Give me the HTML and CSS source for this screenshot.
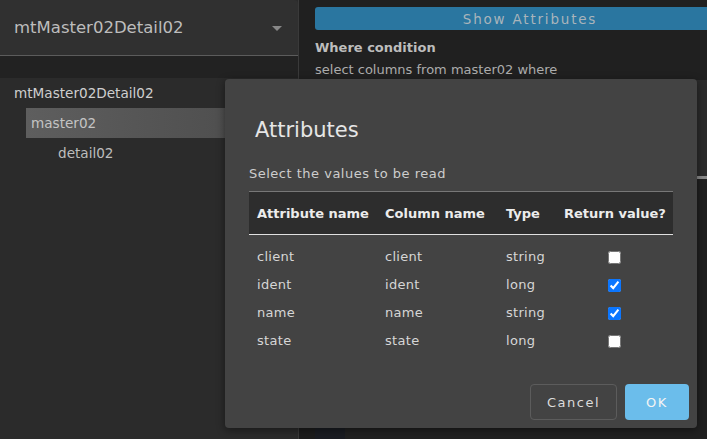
FILE: index.html
```html
<!DOCTYPE html>
<html lang="en">
<head>
    <meta charset="UTF-8">
    <meta name="viewport" content="width=device-width, initial-scale=1.0">
    <title>Attributes</title>
    <link rel="stylesheet" href="styles.css">
</head>
<body>
    <div class="app">
        <div class="sidebar">
            <div class="select">
                <span class="select-text">mtMaster02Detail02</span>
                <span class="select-arrow"></span>
            </div>
            <div class="strip"></div>
            <div class="tree">
                <div class="tree-item">mtMaster02Detail02</div>
                <div class="tree-item level1 selected">master02</div>
                <div class="tree-item level2">detail02</div>
            </div>
        </div>
        <div class="main">
            <button class="show-button">Show Attributes</button>
            <div class="label">Where condition</div>
            <div class="hint">select columns from master02 where</div>
            <div class="editor"></div>
            <div class="editor-line"></div>
            <div class="bottom-row">
                <div class="gutter"></div>
                <div class="gutter-dark"></div>
            </div>
        </div>
    </div>

    <div class="dialog">
        <div class="dialog-title">Attributes</div>
        <div class="dialog-sub">Select the values to be read</div>
        <table class="attr-table">
            <thead>
                <tr>
                    <th class="col-attr">Attribute name</th>
                    <th class="col-column">Column name</th>
                    <th class="col-type">Type</th>
                    <th class="col-ret">Return value?</th>
                </tr>
            </thead>
            <tbody>
                <tr>
                    <td>client</td><td>client</td><td>string</td>
                    <td class="check"><input type="checkbox"></td>
                </tr>
                <tr>
                    <td>ident</td><td>ident</td><td>long</td>
                    <td class="check"><input type="checkbox" checked></td>
                </tr>
                <tr>
                    <td>name</td><td>name</td><td>string</td>
                    <td class="check"><input type="checkbox" checked></td>
                </tr>
                <tr>
                    <td>state</td><td>state</td><td>long</td>
                    <td class="check"><input type="checkbox"></td>
                </tr>
            </tbody>
        </table>
        <div class="dialog-actions">
            <button class="btn cancel">Cancel</button>
            <button class="btn ok">OK</button>
        </div>
    </div>
</body>
</html>
```

FILE: styles.css
```css
* {
    margin: 0;
    padding: 0;
    box-sizing: border-box;
}

body {
    font-family: "DejaVu Sans", sans-serif;
    background-color: #202020;
    width: 707px;
    height: 439px;
    overflow: hidden;
}

.app {
    display: flex;
    height: 439px;
}

.sidebar {
    width: 299px;
    background-color: #2b2b2b;
    border-right: 1px solid #3a3a3a;
    display: flex;
    flex-direction: column;
}

.select {
    height: 56px;
    background-color: #303030;
    border-bottom: 1px solid #5c5c5c;
    border-top-right-radius: 4px;
    display: flex;
    align-items: center;
    justify-content: space-between;
    padding: 0 16px 0 14px;
}

.select-text {
    font-size: 16.5px;
    color: #bdbdbd;
}

.select-arrow {
    width: 0;
    height: 0;
    border-left: 5px solid transparent;
    border-right: 5px solid transparent;
    border-top: 5px solid #888;
    margin-top: 2px;
}

.strip {
    height: 22px;
    background-color: #222;
}

.tree-item {
    height: 30px;
    line-height: 30px;
    font-size: 13.6px;
    color: #cfcfcf;
    padding-left: 14px;
}

.tree-item.level1 {
    margin-left: 26px;
    padding-left: 5px;
}

.tree-item.level2 {
    padding-left: 58px;
    color: #bdbdbd;
}

.tree-item.selected {
    background: linear-gradient(to right, #5e5e5e, #4a4a4a);
    color: #c4c4c4;
}

.main {
    flex: 1;
    overflow: hidden;
    display: flex;
    flex-direction: column;
    padding-top: 7px;
}

.main > * {
    flex-shrink: 0;
}

.show-button {
    margin-left: 16px;
    width: 430px;
    height: 23px;
    background-color: #2a76a0;
    border: none;
    border-radius: 3px;
    color: #a9b4bb;
    font-family: "DejaVu Sans", sans-serif;
    font-size: 13.5px;
    letter-spacing: 1.8px;
}

.label {
    margin: 10px 0 0 16px;
    font-size: 13px;
    line-height: 16px;
    font-weight: bold;
    color: #bdbdbd;
}

.hint {
    margin: 6px 0 0 16px;
    font-size: 13px;
    line-height: 16px;
    color: #acacac;
}

.editor {
    margin: 2px 0 0 16px;
    height: 96px;
    background-color: #2b2b2b;
}

.editor-line {
    margin-left: 16px;
    height: 3px;
    background-color: #8a8a8a;
}

.main > .bottom-row {
    flex: 1;
    display: flex;
    align-items: flex-end;
}

.gutter {
    width: 16px;
    height: 11px;
    background-color: #1c1c1c;
}

.gutter-dark {
    width: 30px;
    height: 11px;
    background-color: #1a1c22;
}

.dialog {
    position: absolute;
    left: 225px;
    top: 79px;
    width: 472px;
    height: 349px;
    background-color: #434343;
    border-radius: 4px;
    box-shadow: 0 2px 8px rgba(0, 0, 0, 0.45);
    padding: 36px 24px 8px 24px;
    display: flex;
    flex-direction: column;
}

.dialog-title {
    font-size: 21px;
    color: #e6e6e6;
    padding-left: 6px;
    line-height: 30px;
}

.dialog-sub {
    margin-top: 20px;
    font-size: 13px;
    letter-spacing: 0.5px;
    color: #cdcdcd;
    line-height: 18px;
}

.attr-table {
    margin-top: 8px;
    width: 424px;
    border-collapse: collapse;
    font-size: 13px;
    letter-spacing: 0.3px;
    color: #d6d6d6;
}

.attr-table thead tr {
    background-color: #2d2d2d;
    border-top: 1px solid #777;
    border-bottom: 1px solid #e0e0e0;
}

.attr-table th {
    height: 43px;
    text-align: left;
    font-weight: bold;
    letter-spacing: 0;
    color: #ececec;
    padding: 0 0 0 8px;
}

.col-attr { width: 128px; }
.col-column { width: 121px; }
.col-type { width: 58px; }

.attr-table td {
    height: 28px;
    padding: 0 0 0 8px;
}

.attr-table tbody tr:first-child td {
    height: 36px;
    padding-top: 8px;
}

.attr-table td.check {
    text-align: center;
    padding-left: 0;
}

.check input {
    width: 13px;
    height: 13px;
    vertical-align: middle;
    accent-color: #0b76ff;
}

.dialog-actions {
    margin-top: auto;
    margin-right: -16px;
    display: flex;
    justify-content: flex-end;
    gap: 8px;
}

.btn {
    height: 36px;
    border-radius: 4px;
    font-family: "DejaVu Sans", sans-serif;
    font-size: 13px;
    letter-spacing: 1.5px;
}

.cancel {
    width: 87px;
    background-color: transparent;
    border: 1px solid #5c5c5c;
    color: #dcdcdc;
}

.ok {
    width: 64px;
    background-color: #6bbdeb;
    border: none;
    color: #f4f4f4;
}
```
